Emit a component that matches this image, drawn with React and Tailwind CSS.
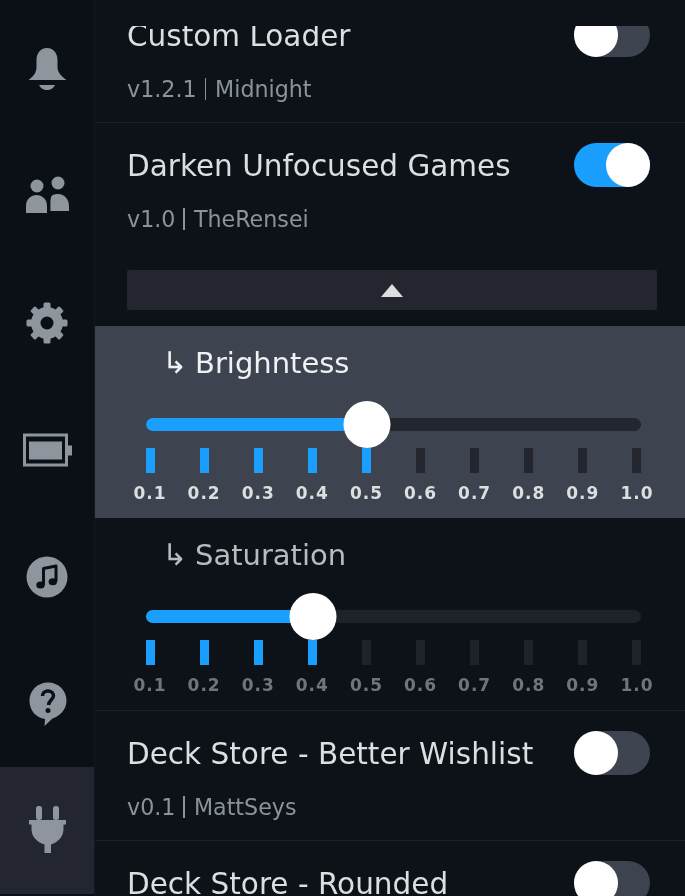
const ICON = "#8f959d";
const SIDEBAR = "#0b1017";

function Bell() {
  return (
    <svg width="48" height="48" viewBox="0 0 48 48" fill={ICON}>
      <path d="M24 3C31 3 34.500 9 34.500 15V22C34.500 27 38 31 43.500 35H5.500C11 31 13.500 27 13.500 22V15C13.500 9 17 3 24 3Z" />
      <path d="M16 40H32C30 44 27 45 24 45C21 45 18 44 16 40Z" />
    </svg>
  );
}
function Friends() {
  return (
    <svg width="48" height="48" viewBox="0 0 48 48" fill={ICON}>
      <circle cx="14" cy="14" r="6.500" />
      <path d="M3 41V34C3 27 8 23 13.500 23C19 23 24 27 24 34V41Z" />
      <circle cx="35" cy="11" r="6.500" />
      <path d="M28.500 24C30 22.500 32.500 22 35 22C41.500 22 46 27 46 34V39H27.500C27.500 33 27 27 28.500 24Z" />
    </svg>
  );
}
function Gear() {
  const angles = [0, 45, 90, 135, 180, 225, 270, 315];
  return (
    <svg width="48" height="48" viewBox="0 0 48 48" fill={ICON}>
      <circle cx="24" cy="24" r="16" />
      {angles.map((a) => (
        <rect key={a} x="20.500" y="3.500" width="7" height="7" rx="1.500" transform={`rotate(${a} 24 24)`} />
      ))}
      <circle cx="24" cy="24" r="6.500" fill={SIDEBAR} />
    </svg>
  );
}
function Battery() {
  return (
    <svg width="50" height="48" viewBox="0 0 50 48" fill={ICON}>
      <path fillRule="evenodd" d="M1 7.500H46V40.500H1ZM4 10.500V37.500H43V10.500Z" />
      <rect x="7" y="15.500" width="33" height="18" />
      <rect x="46" y="19.500" width="4" height="10" />
    </svg>
  );
}
function Music() {
  return (
    <svg width="48" height="48" viewBox="0 0 48 48" fill={ICON}>
      <circle cx="24" cy="24" r="20.500" />
      <path d="M20.500 32V15.500L33 13V28.500" fill="none" stroke={SIDEBAR} strokeWidth="3" strokeLinejoin="round" />
      <ellipse cx="17.500" cy="32" rx="4.200" ry="3.500" fill={SIDEBAR} />
      <ellipse cx="29.800" cy="28.800" rx="4.200" ry="3.500" fill={SIDEBAR} />
    </svg>
  );
}
function Help() {
  return (
    <svg width="48" height="48" viewBox="0 0 48 48" fill={ICON}>
      <path d="M25 2.500C35.500 2.500 43.500 10.500 43.500 20.500C43.500 30 36.500 36 29.500 38.500L21.500 46L22 39C13 38 6.500 30.500 6.500 20.500C6.500 10.500 14.500 2.500 25 2.500Z" />
      <path d="M19.500 16C19.500 13 22 11 25 11C28 11 30.500 13 30.500 15.800C30.500 19.500 26 20 25.500 25" fill="none" stroke={SIDEBAR} strokeWidth="3.500" />
      <circle cx="25" cy="30.500" r="2.500" fill={SIDEBAR} />
    </svg>
  );
}
function Plug() {
  return (
    <svg width="48" height="52" viewBox="0 0 48 52" fill={ICON}>
      <rect x="13" y="1" width="6" height="14" rx="2.500" />
      <rect x="30" y="1" width="6" height="14" rx="2.500" />
      <path d="M6 15H43V19.500H40.500V24C40.500 32 35 37 28 39.500V48H21.500V39.500C14 37 8.500 32 8.500 24V19.500H6Z" />
    </svg>
  );
}

function Toggle({ on }) {
  return (
    <div className={`relative h-[44px] w-[76px] shrink-0 rounded-full ${on ? "bg-[#1a9fff]" : "bg-[#3d4450]"}`}>
      <div className={`absolute top-0 h-[44px] w-[44px] rounded-full bg-white ${on ? "right-0" : "left-0"}`} />
    </div>
  );
}

function Sub({ version, author }) {
  return (
    <div className="mt-[18px] flex h-[28px] items-center text-[22.200px] leading-[28px] text-[#8b929a]">
      <span>{version}</span>
      <span className="ml-[8px] mr-[9px] h-[22px] w-[1.500px] bg-[#8b929a]" />
      <span>{author}</span>
    </div>
  );
}

function Head({ title, on, version, author }) {
  return (
    <div className="h-[130px] pt-[20px] pl-[32px] pr-[35px]">
      <div className="flex h-[44px] items-center justify-between">
        <div className="pt-[2px] text-[29.500px] leading-[44px] text-[#dcdedf]">{title}</div>
        <Toggle on={on} />
      </div>
      {version ? <Sub version={version} author={author} /> : null}
    </div>
  );
}

const VALUES = ["0.1", "0.2", "0.3", "0.4", "0.5", "0.6", "0.7", "0.8", "0.9", "1.0"];

function SliderRow({ title, filled, fillWidth, active }) {
  return (
    <div className={`h-[192px] pt-[17px] ${active ? "bg-[#3d4450]" : ""}`}>
      <div className={`flex h-[40px] items-center pl-[67px] text-[29px] leading-[40px] ${active ? "text-[#f0f1f2]" : "text-[#b8bcbf]"}`}>
        <span className="w-[33px] text-[30px]">↳</span>
        <span>{title}</span>
      </div>
      <div className={`relative ml-[51px] mt-[35px] h-[13px] w-[495px] rounded-full ${active ? "bg-[#23262e]" : "bg-[#1e2229]"}`}>
        <div className="h-[13px] rounded-full bg-[#1a9fff]" style={{ width: fillWidth }} />
        <div
          className="absolute top-[-17px] h-[47px] w-[47px] -translate-x-1/2 rounded-full bg-white"
          style={{ left: fillWidth }}
        />
      </div>
      <div className="ml-[28px] mt-[17px] grid w-[541px] grid-cols-10">
        {VALUES.map((v, i) => (
          <div key={v} className="flex flex-col items-center">
            <div className={`h-[25px] w-[9px] ${i < filled ? "bg-[#1a9fff]" : active ? "bg-[#23262e]" : "bg-[#1e2229]"}`} />
            <div className={`mt-[9px] text-[17px] font-bold leading-[22px] tracking-[1px] ${active ? "text-[#dcdedf]" : "text-[#6f757b]"}`}>
              {v}
            </div>
          </div>
        ))}
      </div>
    </div>
  );
}

export default function App() {
  const tabs = [Bell, Friends, Gear, Battery, Music, Help, Plug];
  return (
    <div
      className="flex h-[896px] w-[685px] overflow-hidden bg-[#0d1219] blur-[0.5px]"
      style={{ fontFamily: '"DejaVu Sans", sans-serif' }}
    >
      <div className="h-full w-[95px] shrink-0 overflow-hidden border-r border-r-[#131920] bg-[#0b1017] pt-[5px]">
        {tabs.map((Icon, i) => (
          <div key={i} className={`flex h-[127px] items-center justify-center ${i === 6 ? "bg-[#23262e]" : ""}`}>
            <Icon />
          </div>
        ))}
      </div>
      <div className="flex h-full min-w-0 flex-1 flex-col pt-[26px]">
        <div className="min-h-0 flex-1 overflow-hidden">
          <div className="mt-[-33px] flex flex-col divide-y divide-[#1c2129]">
            <Head title="Custom Loader" version="v1.2.1" author="Midnight" />
            <div>
              <Head title="Darken Unfocused Games" on version="v1.0" author="TheRensei" />
              <div className="mb-[16px] ml-[32px] mr-[28px] mt-[17px] flex h-[40px] items-center justify-center rounded-[2px] bg-[#23262e]">
                <div className="h-0 w-0 border-x-[11.500px] border-b-[13px] border-x-transparent border-b-[#dcdedf]" />
              </div>
              <SliderRow title="Brighntess" filled={5} fillWidth="221px" active />
              <SliderRow title="Saturation" filled={4} fillWidth="167px" />
            </div>
            <Head title="Deck Store - Better Wishlist" version="v0.1" author="MattSeys" />
            <Head title="Deck Store - Rounded" />
          </div>
        </div>
      </div>
    </div>
  );
}
